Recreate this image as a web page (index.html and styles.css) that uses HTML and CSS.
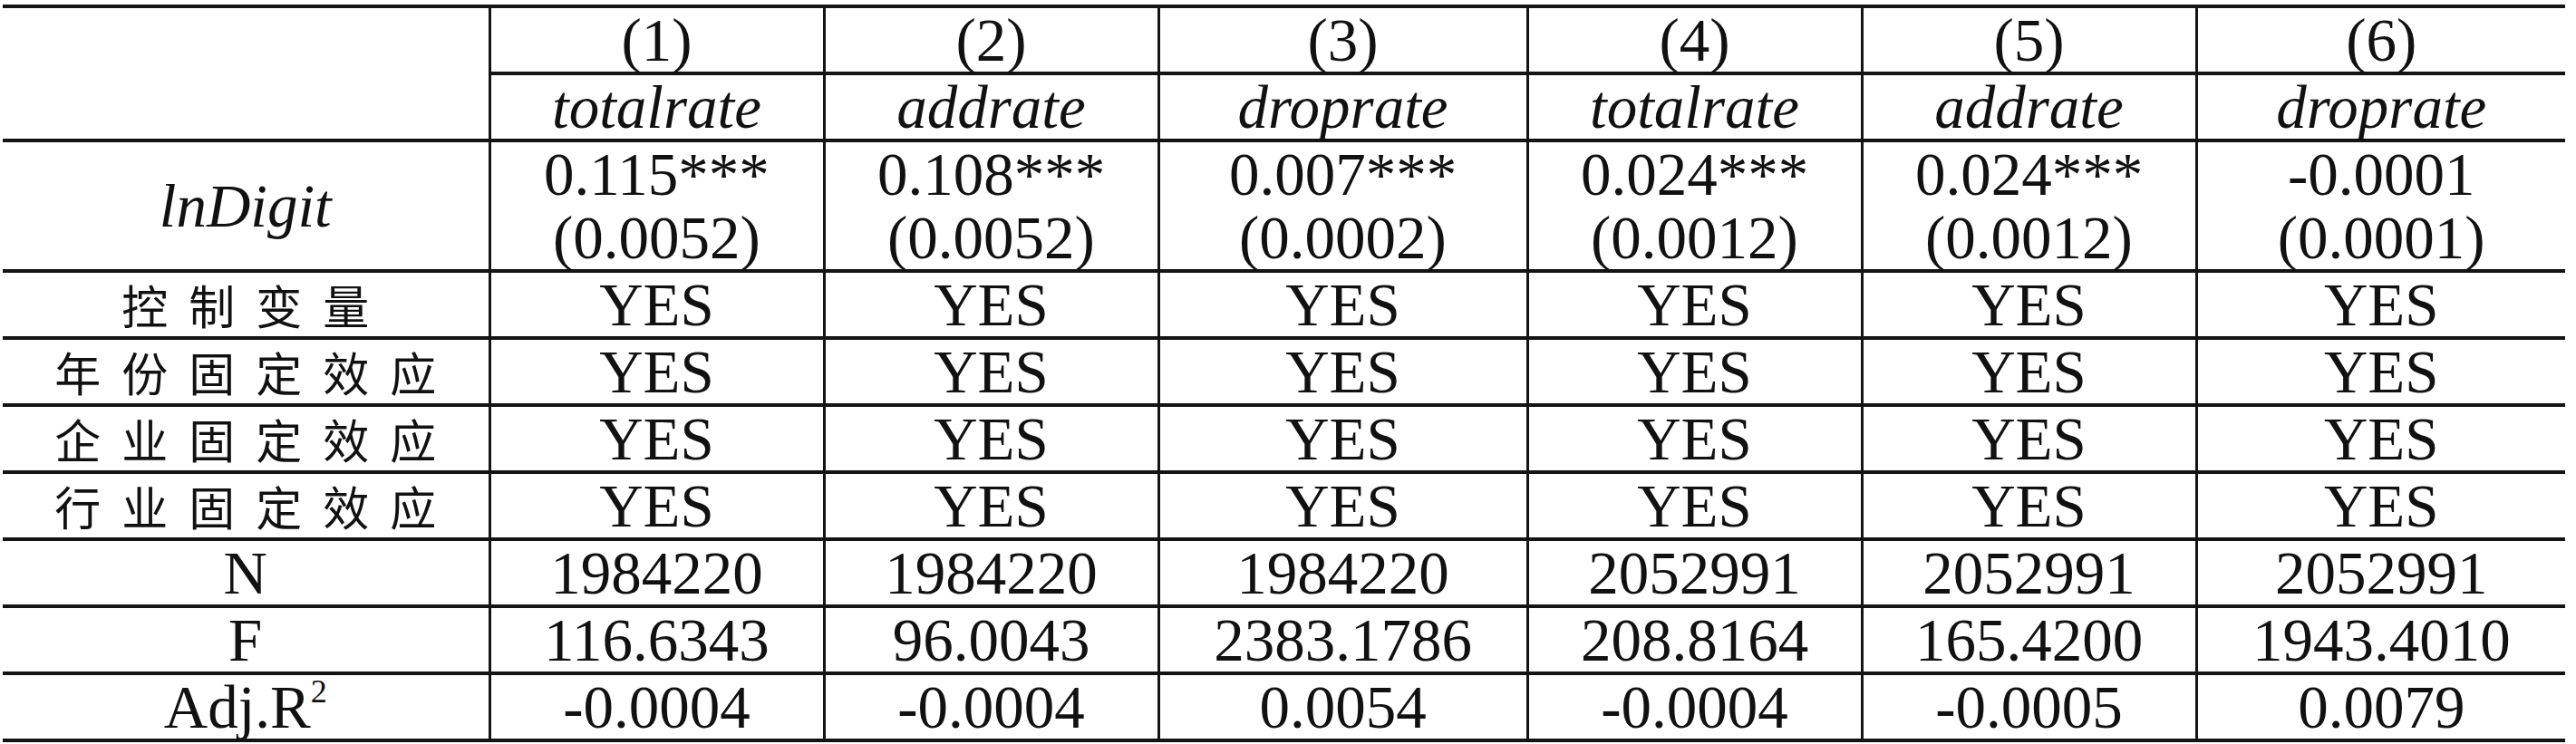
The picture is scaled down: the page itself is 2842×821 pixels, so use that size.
FILE: index.html
```html
<!DOCTYPE html>
<html lang="zh-CN">
<head>
    <meta charset="UTF-8">
    <title>回归结果</title>
    <link rel="stylesheet" href="styles.css">
</head>
<body>
    <table class="results">
        <colgroup>
            <col class="col-label">
            <col class="col-num">
            <col class="col-num">
            <col class="col-wide">
            <col class="col-num">
            <col class="col-num">
            <col class="col-wide">
        </colgroup>
        <tr>
            <td rowspan="2"></td>
            <td>(1)</td>
            <td>(2)</td>
            <td>(3)</td>
            <td>(4)</td>
            <td>(5)</td>
            <td>(6)</td>
        </tr>
        <tr class="var-names">
            <td>totalrate</td>
            <td>addrate</td>
            <td>droprate</td>
            <td>totalrate</td>
            <td>addrate</td>
            <td>droprate</td>
        </tr>
        <tr class="coef">
            <td class="var">lnDigit</td>
            <td>0.115***<br>(0.0052)</td>
            <td>0.108***<br>(0.0052)</td>
            <td>0.007***<br>(0.0002)</td>
            <td>0.024***<br>(0.0012)</td>
            <td>0.024***<br>(0.0012)</td>
            <td>-0.0001<br>(0.0001)</td>
        </tr>
        <tr>
            <td class="cjk">控制变量</td>
            <td>YES</td><td>YES</td><td>YES</td><td>YES</td><td>YES</td><td>YES</td>
        </tr>
        <tr>
            <td class="cjk">年份固定效应</td>
            <td>YES</td><td>YES</td><td>YES</td><td>YES</td><td>YES</td><td>YES</td>
        </tr>
        <tr>
            <td class="cjk">企业固定效应</td>
            <td>YES</td><td>YES</td><td>YES</td><td>YES</td><td>YES</td><td>YES</td>
        </tr>
        <tr>
            <td class="cjk">行业固定效应</td>
            <td>YES</td><td>YES</td><td>YES</td><td>YES</td><td>YES</td><td>YES</td>
        </tr>
        <tr>
            <td>N</td>
            <td>1984220</td>
            <td>1984220</td>
            <td>1984220</td>
            <td>2052991</td>
            <td>2052991</td>
            <td>2052991</td>
        </tr>
        <tr>
            <td>F</td>
            <td>116.6343</td>
            <td>96.0043</td>
            <td>2383.1786</td>
            <td>208.8164</td>
            <td>165.4200</td>
            <td>1943.4010</td>
        </tr>
        <tr>
            <td>Adj.R<sup>2</sup></td>
            <td>-0.0004</td>
            <td>-0.0004</td>
            <td>0.0054</td>
            <td>-0.0004</td>
            <td>-0.0005</td>
            <td>0.0079</td>
        </tr>
    </table>
</body>
</html>
```

FILE: styles.css
```css
* {
    box-sizing: border-box;
}
body {
    background: #ffffff;
    color: #111111;
    font-family: 'Liberation Serif', 'Times New Roman', 'Noto Sans CJK SC', serif;
    margin: 0;
    padding: 5px 0 0 3px;
}
.results {
    border-collapse: collapse;
    table-layout: fixed;
    width: 2827px;
}
.col-label {
    width: 537px;
}
.col-num {
    width: 369px;
}
.col-wide {
    width: 407px;
}
.results td {
    border-top: 4px solid #141414;
    border-bottom: 4px solid #141414;
    border-left: 3px solid #141414;
    border-right: 3px solid #141414;
    font-size: 67px;
    height: 74px;
    line-height: 70px;
    padding: 0;
    text-align: center;
    vertical-align: middle;
}
.results tr td:first-child {
    border-left: none;
}
.results tr td:last-child {
    border-right: none;
}
.results tr:first-child td:first-child {
    border-right: 3px solid #141414;
}
.var-names td {
    font-style: italic;
}
.var-names td:first-child {
    border-left: 3px solid #141414;
}
.coef td {
    height: 143px;
}
.var {
    font-style: italic;
}
.results td.cjk {
    font-family: 'Noto Sans CJK SC', sans-serif;
    font-size: 51px;
    font-weight: 400;
    letter-spacing: 23px;
    line-height: 60px;
    padding-left: 23px;
}
sup {
    font-size: 36px;
    line-height: 0;
    vertical-align: 28px;
}
```
